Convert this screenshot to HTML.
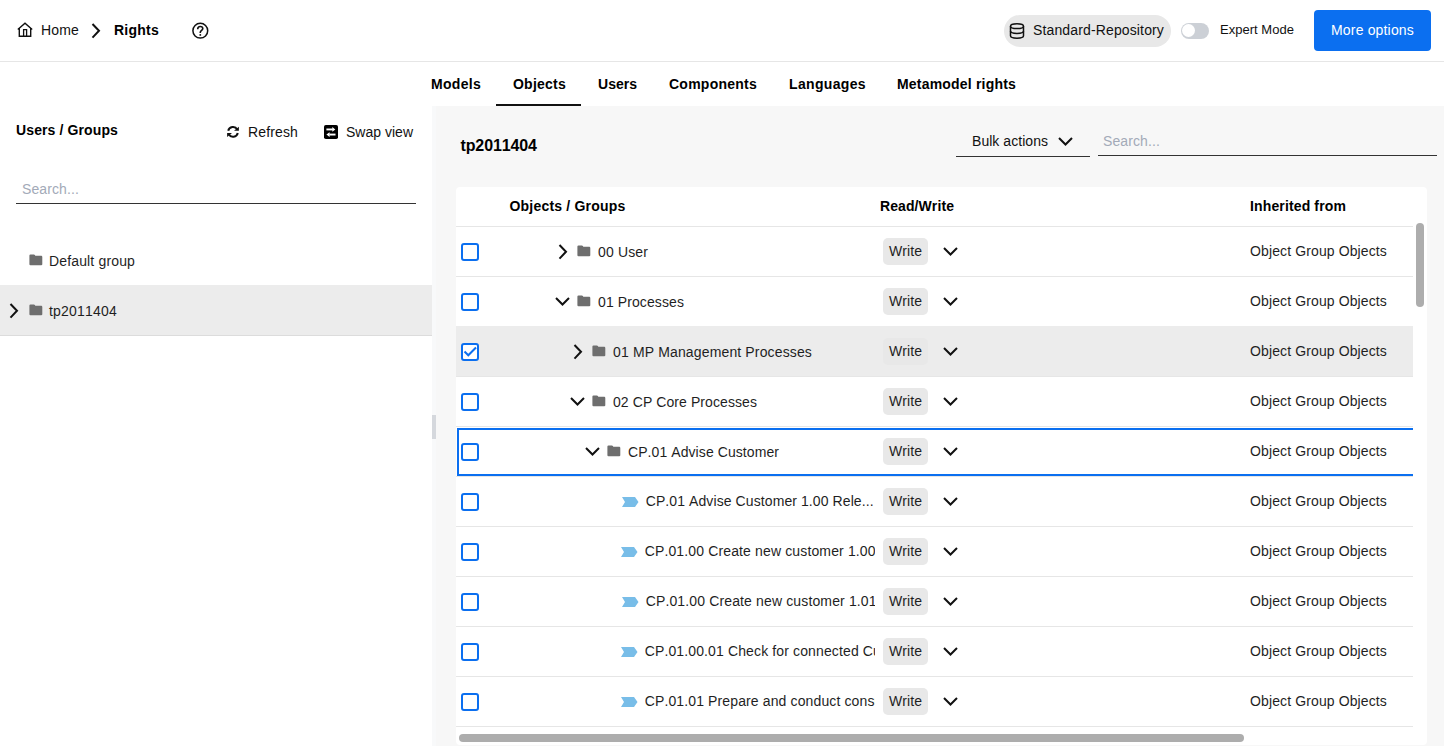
<!DOCTYPE html>
<html><head><meta charset="utf-8">
<style>
*{box-sizing:border-box;margin:0;padding:0}
html,body{width:1444px;height:746px;overflow:hidden;background:#fff}
body{font-family:"Liberation Sans",sans-serif;font-size:14px;color:#1f1f1f;position:relative;font-kerning:none}
.a{position:absolute}
.t{position:absolute;white-space:nowrap;line-height:16px}
svg{position:absolute;overflow:visible}
</style></head><body>
<div class="a" style="left:0px;top:61px;width:1444px;height:1px;background:#e6e6e6"></div>
<svg style="left:17px;top:22px" width="16" height="16" viewBox="0 0 16 16"><path d="M0.8 7.6 L8 1.2 L15.2 7.6" fill="none" stroke="#111" stroke-width="1.4" stroke-linejoin="miter"/><path d="M2.3 6 V14.3 H13.7 V6" fill="none" stroke="#111" stroke-width="1.4"/><path d="M6.6 14.3 V7.7 H9.6 V14.3" fill="none" stroke="#111" stroke-width="1.3"/></svg>
<div class="t" style="left:41px;top:22px;color:#111;letter-spacing:0.164px">Home</div>
<svg style="left:91px;top:23.0px" width="9" height="16" viewBox="0 0 9 16"><path d="M1.5 1 L8 7.8 L1.5 14.6" fill="none" stroke="#111" stroke-width="2"/></svg>
<div class="t" style="left:114px;top:22px;font-weight:bold;color:#000;letter-spacing:0.241px">Rights</div>
<svg style="left:192px;top:22px" width="17" height="17" viewBox="0 0 17 17"><circle cx="8.3" cy="8.7" r="7.4" fill="none" stroke="#111" stroke-width="1.5"/><path d="M5.7 7.2 C5.7 5.4 6.8 4.5 8.2 4.5 C9.7 4.5 10.8 5.3 10.8 6.6 C10.8 8.1 8.3 8.6 8.3 10.3 V11" fill="none" stroke="#111" stroke-width="1.6"/><circle cx="8.3" cy="12.9" r="0.95" fill="#111"/></svg>
<div class="a" style="left:1004px;top:15px;width:167px;height:32px;background:#e8e8e8;border-radius:16px"></div>
<svg style="left:1009px;top:23px" width="16" height="16" viewBox="0 0 16 16"><ellipse cx="8" cy="3.2" rx="6.5" ry="2.4" fill="none" stroke="#111" stroke-width="1.5"/><path d="M1.5 3.2 V12.8 C1.5 14.1 4.4 15.2 8 15.2 C11.6 15.2 14.5 14.1 14.5 12.8 V3.2" fill="none" stroke="#111" stroke-width="1.5"/><path d="M1.5 8 C1.5 9.3 4.4 10.4 8 10.4 C11.6 10.4 14.5 9.3 14.5 8" fill="none" stroke="#111" stroke-width="1.5"/></svg>
<div class="t" style="left:1033px;top:22px;color:#111;letter-spacing:0.137px">Standard-Repository</div>
<div class="a" style="left:1181px;top:23px;width:28px;height:16px;background:#ccd0d6;border-radius:8px"></div>
<div class="a" style="left:1181.6px;top:23.7px;width:13.4px;height:13.4px;background:#fff;border-radius:7px"></div>
<div class="t" style="left:1220px;top:22px;font-size:13px;color:#111;letter-spacing:0.027px">Expert Mode</div>
<div class="a" style="left:1314px;top:10px;width:117px;height:41px;background:#0b6ff0;border-radius:4px"></div>
<div class="t" style="left:1331px;top:22px;color:#fff;letter-spacing:0.172px">More options</div>
<div class="t" style="left:431px;top:76px;font-weight:bold;color:#000;letter-spacing:0.295px">Models</div>
<div class="t" style="left:513px;top:76px;font-weight:bold;color:#000;letter-spacing:0.235px">Objects</div>
<div class="t" style="left:598px;top:76px;font-weight:bold;color:#000;letter-spacing:0.017px">Users</div>
<div class="t" style="left:669px;top:76px;font-weight:bold;color:#000;letter-spacing:0.245px">Components</div>
<div class="t" style="left:789px;top:76px;font-weight:bold;color:#000;letter-spacing:0.344px">Languages</div>
<div class="t" style="left:897px;top:76px;font-weight:bold;color:#000;letter-spacing:0.194px">Metamodel rights</div>
<div class="a" style="left:496px;top:104px;width:85px;height:2px;background:#111"></div>
<div class="a" style="left:432px;top:106px;width:1012px;height:640px;background:#f7f7f7"></div>
<div class="a" style="left:432px;top:106px;width:4px;height:640px;background:#f8f9fa"></div>
<div class="a" style="left:432px;top:415px;width:4px;height:24px;background:#d5d8dd"></div>
<div class="t" style="left:16px;top:122px;font-weight:bold;color:#000;letter-spacing:0.117px">Users / Groups</div>
<svg style="left:225px;top:125px" width="16" height="14" viewBox="0 0 16 14"><path d="M3.22 5.8 A4.9 4.9 0 0 1 12.24 4.45" fill="none" stroke="#111" stroke-width="2"/><path d="M13.9 1.8 V5.8 H9 Z" fill="#111"/><path d="M12.78 8 A4.9 4.9 0 0 1 3.76 9.35" fill="none" stroke="#111" stroke-width="2"/><path d="M2.1 12 V8 H7 Z" fill="#111"/></svg>
<div class="t" style="left:248px;top:124px;color:#111;letter-spacing:0.140px">Refresh</div>
<svg style="left:324px;top:125px" width="14" height="14" viewBox="0 0 14 14"><rect x="0" y="0" width="14" height="14" rx="1.8" fill="#000"/><rect x="2.4" y="3.5" width="6.4" height="1.9" fill="#fff"/><path d="M8.3 2.1 L11.3 4.45 L8.3 6.8 Z" fill="#fff"/><rect x="5.4" y="8.6" width="6.1" height="1.9" fill="#fff"/><path d="M5.6 7.2 L2.4 9.55 L5.6 11.9 Z" fill="#fff"/></svg>
<div class="t" style="left:346px;top:124px;color:#111;letter-spacing:0.009px">Swap view</div>
<div class="t" style="left:22px;top:181px;color:#a3aab8;letter-spacing:0.108px">Search...</div>
<div class="a" style="left:16px;top:203px;width:400px;height:1px;background:#333"></div>
<svg style="left:29px;top:253.5px" width="14" height="12" viewBox="0 0 14 12"><path d="M0.4 1.6 Q0.4 0.5 1.5 0.5 H4.9 Q5.5 0.5 5.9 1.1 L6.3 1.8 H12.2 Q13.3 1.8 13.3 2.9 V10.2 Q13.3 11.2 12.2 11.2 H1.5 Q0.4 11.2 0.4 10.2 Z" fill="#6e6e6e"/></svg>
<div class="t" style="left:49px;top:253px;letter-spacing:0.150px">Default group</div>
<div class="a" style="left:0px;top:285px;width:432px;height:50px;background:#ececec"></div>
<div class="a" style="left:0px;top:335px;width:432px;height:1px;background:#dcdcdc"></div>
<svg style="left:9px;top:303.3px" width="9" height="16" viewBox="0 0 9 16"><path d="M1.5 1 L8 7.8 L1.5 14.6" fill="none" stroke="#111" stroke-width="2"/></svg>
<svg style="left:29px;top:303.5px" width="14" height="12" viewBox="0 0 14 12"><path d="M0.4 1.6 Q0.4 0.5 1.5 0.5 H4.9 Q5.5 0.5 5.9 1.1 L6.3 1.8 H12.2 Q13.3 1.8 13.3 2.9 V10.2 Q13.3 11.2 12.2 11.2 H1.5 Q0.4 11.2 0.4 10.2 Z" fill="#6e6e6e"/></svg>
<div class="t" style="left:49px;top:303px;letter-spacing:0.202px">tp2011404</div>
<div class="t" style="left:460.5px;top:137px;font-size:16px;font-weight:bold;color:#000;line-height:18px;letter-spacing:-0.12px">tp2011404</div>
<div class="t" style="left:972px;top:133px;color:#111;letter-spacing:0.043px">Bulk actions</div>
<svg style="left:1058px;top:137px" width="15" height="9" viewBox="0 0 15 9"><path d="M1 1 L7.5 7.5 L14 1" fill="none" stroke="#111" stroke-width="2"/></svg>
<div class="a" style="left:956px;top:156px;width:134px;height:1px;background:#333"></div>
<div class="t" style="left:1103px;top:133px;color:#a3aab8;letter-spacing:0.108px">Search...</div>
<div class="a" style="left:1098px;top:155px;width:339px;height:1px;background:#333"></div>
<div class="a" style="left:456px;top:187px;width:971px;height:558px;background:#fff;border-radius:4px"></div>
<div class="t" style="left:509.5px;top:198px;font-weight:bold;color:#000;letter-spacing:0.200px">Objects / Groups</div>
<div class="t" style="left:880px;top:198px;font-weight:bold;color:#000;letter-spacing:0.088px">Read/Write</div>
<div class="t" style="left:1250px;top:198px;font-weight:bold;color:#000;letter-spacing:0.134px">Inherited from</div>
<div class="a" style="left:456px;top:226px;width:957px;height:1px;background:#e6e6e6"></div>
<div class="a" style="left:456px;top:276px;width:957px;height:1px;background:#e6e6e6"></div>
<div class="a" style="left:461px;top:243px;width:18px;height:18px;background:#fff;border:2px solid #0b6ff0;border-radius:3px"></div>
<svg style="left:558px;top:244.3px" width="9" height="16" viewBox="0 0 9 16"><path d="M1.5 1 L8 7.8 L1.5 14.6" fill="none" stroke="#111" stroke-width="2"/></svg>
<svg style="left:577px;top:244.5px" width="14" height="12" viewBox="0 0 14 12"><path d="M0.4 1.6 Q0.4 0.5 1.5 0.5 H4.9 Q5.5 0.5 5.9 1.1 L6.3 1.8 H12.2 Q13.3 1.8 13.3 2.9 V10.2 Q13.3 11.2 12.2 11.2 H1.5 Q0.4 11.2 0.4 10.2 Z" fill="#6e6e6e"/></svg>
<div class="t" style="left:598px;top:244px;color:#1f1f1f;letter-spacing:0.140px">00 User</div>
<div class="a" style="left:883px;top:238px;width:45px;height:27px;background:#e8e8e8;border-radius:5px"></div>
<div class="t" style="left:889px;top:243px;color:#1f1f1f;letter-spacing:0.068px">Write</div>
<svg style="left:943px;top:247px" width="15" height="9" viewBox="0 0 15 9"><path d="M1 1 L7.5 7.5 L14 1" fill="none" stroke="#111" stroke-width="2"/></svg>
<div class="t" style="left:1250px;top:243px;color:#1f1f1f;letter-spacing:0.119px">Object Group Objects</div>
<div class="a" style="left:456px;top:326px;width:957px;height:1px;background:#e6e6e6"></div>
<div class="a" style="left:461px;top:293px;width:18px;height:18px;background:#fff;border:2px solid #0b6ff0;border-radius:3px"></div>
<svg style="left:555px;top:297px" width="15" height="9" viewBox="0 0 15 9"><path d="M1 1 L7.5 7.5 L14 1" fill="none" stroke="#111" stroke-width="2"/></svg>
<svg style="left:577px;top:294.5px" width="14" height="12" viewBox="0 0 14 12"><path d="M0.4 1.6 Q0.4 0.5 1.5 0.5 H4.9 Q5.5 0.5 5.9 1.1 L6.3 1.8 H12.2 Q13.3 1.8 13.3 2.9 V10.2 Q13.3 11.2 12.2 11.2 H1.5 Q0.4 11.2 0.4 10.2 Z" fill="#6e6e6e"/></svg>
<div class="t" style="left:598px;top:294px;color:#1f1f1f;letter-spacing:0.098px">01 Processes</div>
<div class="a" style="left:883px;top:288px;width:45px;height:27px;background:#e8e8e8;border-radius:5px"></div>
<div class="t" style="left:889px;top:293px;color:#1f1f1f;letter-spacing:0.068px">Write</div>
<svg style="left:943px;top:297px" width="15" height="9" viewBox="0 0 15 9"><path d="M1 1 L7.5 7.5 L14 1" fill="none" stroke="#111" stroke-width="2"/></svg>
<div class="t" style="left:1250px;top:293px;color:#1f1f1f;letter-spacing:0.119px">Object Group Objects</div>
<div class="a" style="left:456px;top:326px;width:957px;height:50px;background:#ececec"></div>
<div class="a" style="left:456px;top:376px;width:957px;height:1px;background:#e6e6e6"></div>
<div class="a" style="left:461px;top:343px;width:18px;height:18px;background:#fff;border:2px solid #0b6ff0;border-radius:3px"></div>
<svg style="left:461px;top:343px" width="18" height="18" viewBox="0 0 18 18"><path d="M3.5 8.5 L7.3 12.3 L15 4.5" fill="none" stroke="#0b6ff0" stroke-width="2"/></svg>
<svg style="left:573px;top:344.3px" width="9" height="16" viewBox="0 0 9 16"><path d="M1.5 1 L8 7.8 L1.5 14.6" fill="none" stroke="#111" stroke-width="2"/></svg>
<svg style="left:592px;top:344.5px" width="14" height="12" viewBox="0 0 14 12"><path d="M0.4 1.6 Q0.4 0.5 1.5 0.5 H4.9 Q5.5 0.5 5.9 1.1 L6.3 1.8 H12.2 Q13.3 1.8 13.3 2.9 V10.2 Q13.3 11.2 12.2 11.2 H1.5 Q0.4 11.2 0.4 10.2 Z" fill="#6e6e6e"/></svg>
<div class="t" style="left:613px;top:344px;color:#1f1f1f;letter-spacing:0.142px">01 MP Management Processes</div>
<div class="a" style="left:883px;top:338px;width:45px;height:27px;background:#e8e8e8;border-radius:5px"></div>
<div class="t" style="left:889px;top:343px;color:#1f1f1f;letter-spacing:0.068px">Write</div>
<svg style="left:943px;top:347px" width="15" height="9" viewBox="0 0 15 9"><path d="M1 1 L7.5 7.5 L14 1" fill="none" stroke="#111" stroke-width="2"/></svg>
<div class="t" style="left:1250px;top:343px;color:#1f1f1f;letter-spacing:0.119px">Object Group Objects</div>
<div class="a" style="left:456px;top:426px;width:957px;height:1px;background:#e6e6e6"></div>
<div class="a" style="left:461px;top:393px;width:18px;height:18px;background:#fff;border:2px solid #0b6ff0;border-radius:3px"></div>
<svg style="left:570px;top:397px" width="15" height="9" viewBox="0 0 15 9"><path d="M1 1 L7.5 7.5 L14 1" fill="none" stroke="#111" stroke-width="2"/></svg>
<svg style="left:592px;top:394.5px" width="14" height="12" viewBox="0 0 14 12"><path d="M0.4 1.6 Q0.4 0.5 1.5 0.5 H4.9 Q5.5 0.5 5.9 1.1 L6.3 1.8 H12.2 Q13.3 1.8 13.3 2.9 V10.2 Q13.3 11.2 12.2 11.2 H1.5 Q0.4 11.2 0.4 10.2 Z" fill="#6e6e6e"/></svg>
<div class="t" style="left:613px;top:394px;color:#1f1f1f;letter-spacing:0.080px">02 CP Core Processes</div>
<div class="a" style="left:883px;top:388px;width:45px;height:27px;background:#e8e8e8;border-radius:5px"></div>
<div class="t" style="left:889px;top:393px;color:#1f1f1f;letter-spacing:0.068px">Write</div>
<svg style="left:943px;top:397px" width="15" height="9" viewBox="0 0 15 9"><path d="M1 1 L7.5 7.5 L14 1" fill="none" stroke="#111" stroke-width="2"/></svg>
<div class="t" style="left:1250px;top:393px;color:#1f1f1f;letter-spacing:0.119px">Object Group Objects</div>
<div class="a" style="left:456px;top:476px;width:957px;height:1px;background:#e6e6e6"></div>
<div class="a" style="left:461px;top:443px;width:18px;height:18px;background:#fff;border:2px solid #0b6ff0;border-radius:3px"></div>
<svg style="left:585px;top:447px" width="15" height="9" viewBox="0 0 15 9"><path d="M1 1 L7.5 7.5 L14 1" fill="none" stroke="#111" stroke-width="2"/></svg>
<svg style="left:607px;top:444.5px" width="14" height="12" viewBox="0 0 14 12"><path d="M0.4 1.6 Q0.4 0.5 1.5 0.5 H4.9 Q5.5 0.5 5.9 1.1 L6.3 1.8 H12.2 Q13.3 1.8 13.3 2.9 V10.2 Q13.3 11.2 12.2 11.2 H1.5 Q0.4 11.2 0.4 10.2 Z" fill="#6e6e6e"/></svg>
<div class="t" style="left:628px;top:444px;color:#1f1f1f;letter-spacing:0.077px">CP.01 Advise Customer</div>
<div class="a" style="left:883px;top:438px;width:45px;height:27px;background:#e8e8e8;border-radius:5px"></div>
<div class="t" style="left:889px;top:443px;color:#1f1f1f;letter-spacing:0.068px">Write</div>
<svg style="left:943px;top:447px" width="15" height="9" viewBox="0 0 15 9"><path d="M1 1 L7.5 7.5 L14 1" fill="none" stroke="#111" stroke-width="2"/></svg>
<div class="t" style="left:1250px;top:443px;color:#1f1f1f;letter-spacing:0.119px">Object Group Objects</div>
<div class="a" style="left:456px;top:526px;width:957px;height:1px;background:#e6e6e6"></div>
<div class="a" style="left:461px;top:493px;width:18px;height:18px;background:#fff;border:2px solid #0b6ff0;border-radius:3px"></div>
<svg style="left:622px;top:497px" width="17" height="10" viewBox="0 0 17 10"><path d="M0 0 H13 L16.5 5 L13 10 H0 L3 5 Z" fill="#78bde8"/></svg>
<div class="t" style="left:645.7px;top:493px;color:#1f1f1f;letter-spacing:0.092px;width:229.3px;overflow:hidden">CP.01 Advise Customer 1.00 Rele...</div>
<div class="a" style="left:883px;top:488px;width:45px;height:27px;background:#e8e8e8;border-radius:5px"></div>
<div class="t" style="left:889px;top:493px;color:#1f1f1f;letter-spacing:0.068px">Write</div>
<svg style="left:943px;top:497px" width="15" height="9" viewBox="0 0 15 9"><path d="M1 1 L7.5 7.5 L14 1" fill="none" stroke="#111" stroke-width="2"/></svg>
<div class="t" style="left:1250px;top:493px;color:#1f1f1f;letter-spacing:0.119px">Object Group Objects</div>
<div class="a" style="left:456px;top:576px;width:957px;height:1px;background:#e6e6e6"></div>
<div class="a" style="left:461px;top:543px;width:18px;height:18px;background:#fff;border:2px solid #0b6ff0;border-radius:3px"></div>
<svg style="left:621px;top:547px" width="17" height="10" viewBox="0 0 17 10"><path d="M0 0 H13 L16.5 5 L13 10 H0 L3 5 Z" fill="#78bde8"/></svg>
<div class="t" style="left:644.7px;top:543px;color:#1f1f1f;letter-spacing:0.138px;width:230.3px;overflow:hidden">CP.01.00 Create new customer 1.00</div>
<div class="a" style="left:883px;top:538px;width:45px;height:27px;background:#e8e8e8;border-radius:5px"></div>
<div class="t" style="left:889px;top:543px;color:#1f1f1f;letter-spacing:0.068px">Write</div>
<svg style="left:943px;top:547px" width="15" height="9" viewBox="0 0 15 9"><path d="M1 1 L7.5 7.5 L14 1" fill="none" stroke="#111" stroke-width="2"/></svg>
<div class="t" style="left:1250px;top:543px;color:#1f1f1f;letter-spacing:0.119px">Object Group Objects</div>
<div class="a" style="left:456px;top:626px;width:957px;height:1px;background:#e6e6e6"></div>
<div class="a" style="left:461px;top:593px;width:18px;height:18px;background:#fff;border:2px solid #0b6ff0;border-radius:3px"></div>
<svg style="left:622px;top:597px" width="17" height="10" viewBox="0 0 17 10"><path d="M0 0 H13 L16.5 5 L13 10 H0 L3 5 Z" fill="#78bde8"/></svg>
<div class="t" style="left:645.7px;top:593px;color:#1f1f1f;letter-spacing:0.138px;width:229.3px;overflow:hidden">CP.01.00 Create new customer 1.01</div>
<div class="a" style="left:883px;top:588px;width:45px;height:27px;background:#e8e8e8;border-radius:5px"></div>
<div class="t" style="left:889px;top:593px;color:#1f1f1f;letter-spacing:0.068px">Write</div>
<svg style="left:943px;top:597px" width="15" height="9" viewBox="0 0 15 9"><path d="M1 1 L7.5 7.5 L14 1" fill="none" stroke="#111" stroke-width="2"/></svg>
<div class="t" style="left:1250px;top:593px;color:#1f1f1f;letter-spacing:0.119px">Object Group Objects</div>
<div class="a" style="left:456px;top:676px;width:957px;height:1px;background:#e6e6e6"></div>
<div class="a" style="left:461px;top:643px;width:18px;height:18px;background:#fff;border:2px solid #0b6ff0;border-radius:3px"></div>
<svg style="left:621px;top:647px" width="17" height="10" viewBox="0 0 17 10"><path d="M0 0 H13 L16.5 5 L13 10 H0 L3 5 Z" fill="#78bde8"/></svg>
<div class="t" style="left:644.7px;top:643px;color:#1f1f1f;letter-spacing:0.129px;width:230.3px;overflow:hidden">CP.01.00.01 Check for connected Customers</div>
<div class="a" style="left:883px;top:638px;width:45px;height:27px;background:#e8e8e8;border-radius:5px"></div>
<div class="t" style="left:889px;top:643px;color:#1f1f1f;letter-spacing:0.068px">Write</div>
<svg style="left:943px;top:647px" width="15" height="9" viewBox="0 0 15 9"><path d="M1 1 L7.5 7.5 L14 1" fill="none" stroke="#111" stroke-width="2"/></svg>
<div class="t" style="left:1250px;top:643px;color:#1f1f1f;letter-spacing:0.119px">Object Group Objects</div>
<div class="a" style="left:456px;top:726px;width:957px;height:1px;background:#e6e6e6"></div>
<div class="a" style="left:461px;top:693px;width:18px;height:18px;background:#fff;border:2px solid #0b6ff0;border-radius:3px"></div>
<svg style="left:621px;top:697px" width="17" height="10" viewBox="0 0 17 10"><path d="M0 0 H13 L16.5 5 L13 10 H0 L3 5 Z" fill="#78bde8"/></svg>
<div class="t" style="left:644.7px;top:693px;color:#1f1f1f;letter-spacing:0.126px;width:230.3px;overflow:hidden">CP.01.01 Prepare and conduct consultation</div>
<div class="a" style="left:883px;top:688px;width:45px;height:27px;background:#e8e8e8;border-radius:5px"></div>
<div class="t" style="left:889px;top:693px;color:#1f1f1f;letter-spacing:0.068px">Write</div>
<svg style="left:943px;top:697px" width="15" height="9" viewBox="0 0 15 9"><path d="M1 1 L7.5 7.5 L14 1" fill="none" stroke="#111" stroke-width="2"/></svg>
<div class="t" style="left:1250px;top:693px;color:#1f1f1f;letter-spacing:0.119px">Object Group Objects</div>
<div class="a" style="left:457px;top:428px;width:956px;height:48px;border:2px solid #0b6ff0;border-right:none"></div>
<div class="a" style="left:1416px;top:223px;width:8px;height:84px;background:#adadad;border-radius:4px"></div>
<div class="a" style="left:459px;top:734px;width:785px;height:8px;background:#adadad;border-radius:4px"></div>
</body></html>
